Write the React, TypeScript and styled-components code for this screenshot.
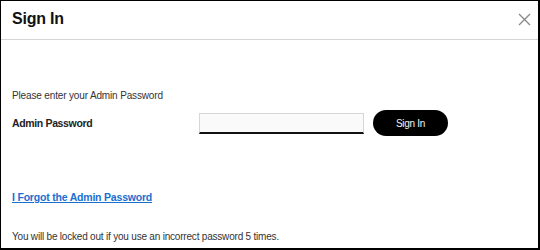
import React from 'react';
import styled, { createGlobalStyle } from 'styled-components';

const GlobalStyle = createGlobalStyle`
  html, body {
    margin: 0;
    padding: 0;
    background: #fff;
  }
  body {
    font-family: 'Liberation Sans', Arial, sans-serif;
    color: #222;
  }
`;

const Dialog = styled.div`
  width: 540px;
  height: 250px;
  box-sizing: border-box;
  border-style: solid;
  border-color: #000;
  border-width: 1px 2px 2px 1px;
  display: flex;
  flex-direction: column;
  background: #fff;
`;

const Header = styled.div`
  height: 39px;
  box-sizing: border-box;
  border-bottom: 1px solid #d4d4d4;
  display: flex;
  align-items: center;
  justify-content: space-between;
  padding: 0 6px 2px 11px;
`;

const Title = styled.h1`
  margin: 0;
  font-size: 16px;
  font-weight: 700;
  letter-spacing: -0.2px;
  color: #111;
`;

const CloseButton = styled.button`
  border: 0;
  background: none;
  padding: 0;
  width: 16px;
  height: 16px;
  display: flex;
  align-items: center;
  justify-content: center;
  cursor: pointer;
`;

const Body = styled.div`
  flex: 1;
  display: flex;
  flex-direction: column;
  padding: 0 11px;
`;

const Hint = styled.p`
  margin: 50px 0 0;
  font-size: 10px;
  letter-spacing: -0.15px;
  color: #333;
`;

const FormRow = styled.div`
  display: flex;
  align-items: center;
  margin-top: 9px;
`;

const Label = styled.label`
  width: 187px;
  font-size: 10.5px;
  font-weight: 700;
  letter-spacing: -0.35px;
  color: #222;
`;

const PasswordInput = styled.input`
  width: 165px;
  height: 21px;
  box-sizing: border-box;
  border: 1px solid #d6d6d6;
  border-bottom: 2px solid #111;
  background: #fafafa;
  padding: 0 4px;
  outline: none;
`;

const SignInButton = styled.button`
  margin-left: 9px;
  width: 75px;
  height: 26px;
  border: 0;
  border-radius: 13px;
  background: #000;
  color: #f4f4f4;
  font-family: 'Liberation Sans', Arial, sans-serif;
  font-size: 10px;
  letter-spacing: -0.3px;
  cursor: pointer;
`;

const ForgotLink = styled.a`
  margin-top: 55px;
  align-self: flex-start;
  font-size: 10.5px;
  font-weight: 700;
  letter-spacing: -0.2px;
  color: #1a6fcf;
  text-decoration: underline;
`;

const Note = styled.p`
  margin: 28px 0 0;
  font-size: 10px;
  letter-spacing: -0.2px;
  color: #333;
`;

export default function App() {
  return (
    <>
      <GlobalStyle />
      <Dialog>
        <Header>
          <Title>Sign In</Title>
          <CloseButton aria-label="Close">
            <svg width="13" height="13" viewBox="0 0 13 13">
              <path d="M1 1L12 12M12 1L1 12" stroke="#8a8a8a" strokeWidth="1.4" />
            </svg>
          </CloseButton>
        </Header>
        <Body>
          <Hint>Please enter your Admin Password</Hint>
          <FormRow>
            <Label htmlFor="admin-password">Admin Password</Label>
            <PasswordInput id="admin-password" type="password" />
            <SignInButton>Sign In</SignInButton>
          </FormRow>
          <ForgotLink href="#">I Forgot the Admin Password</ForgotLink>
          <Note>You will be locked out if you use an incorrect password 5 times.</Note>
        </Body>
      </Dialog>
    </>
  );
}
